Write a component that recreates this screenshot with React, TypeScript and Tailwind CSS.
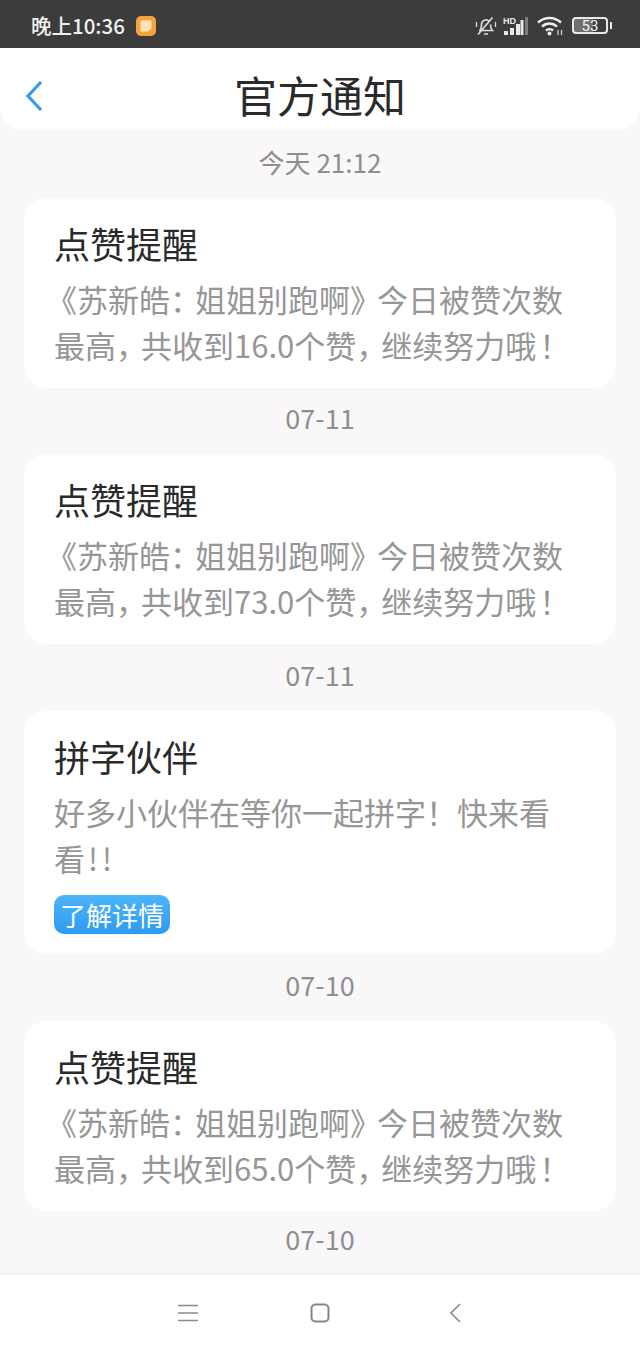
const font = "font-['Noto_Sans_CJK_SC','Noto_Sans',sans-serif]"

const DateLabel = ({ text, h }: { text: string; h: string }) => (
  <div className={`${h} flex items-center justify-center pb-[5px] text-[#8e8e8e] ${text.startsWith("今") ? "text-[26px]" : "text-[27px]"}`}>
    {text}
  </div>
)

const Card = ({ title, children, action }: { title: string; children: React.ReactNode; action?: boolean }) => (
  <div className="mx-6 px-[30px] pt-[19px] pb-[20px] bg-white rounded-[22px]">
    <div className="h-[52px] flex items-center text-[36px] text-[#2a2a2a] leading-none">{title}</div>
    <div className="mt-[7px] text-[31px] text-[#969696] leading-[46px] whitespace-nowrap">{children}</div>
    {action && (
      <div className="mt-[14px] w-[116px] h-[39px] flex items-center justify-center rounded-[10px] bg-gradient-to-b from-[#4cb4fa] to-[#2f9bf0] text-white text-[26px] leading-none">
        了解详情
      </div>
    )}
  </div>
)

// punctuation is set tighter on the phone than in Noto's full-width cells
const Comma = () => <span className="tracking-[-6px]">，</span>

const LikeText = ({ count }: { count: string }) => (
  <>
    <div className="h-[46px]">
      <span className="-ml-[8px]">《</span>苏新皓<span className="tracking-[-6px]">：</span>姐姐别跑啊
      <span className="tracking-[-4px]">》</span>今日被赞次数
    </div>
    <div className="h-[46px]">
      最高<Comma />共收到{count}个赞<Comma />继续努力哦<span className="ml-[3px]">！</span>
    </div>
  </>
)

const StatusIcons = () => (
  <div className="flex items-center">
    <svg width="22" height="20" viewBox="0 0 22 20" fill="none" stroke="#dcdcdc" strokeWidth="1.700">
      <path d="M5 14.500c1.500-2 1.500-3.500 1.500-6a4.500 4.500 0 0 1 8-2.800M15.500 8.500c0 2.500 0 4 2 6H4M9 18h4M3 18.500L17.500 1.500" />
      <path d="M1.500 6v5M20.500 6v5" strokeWidth="1.300" />
    </svg>
    <svg width="25" height="19" viewBox="0 0 25 19" className="ml-[6px]">
      <text x="0" y="7.500" fontSize="9" fontWeight="700" fill="#e8e8e8" fontFamily="Liberation Sans">HD</text>
      <rect x="1" y="15" width="4" height="4" fill="#e8e8e8" />
      <rect x="7" y="12" width="4" height="7" fill="#e8e8e8" />
      <rect x="13" y="8" width="4" height="11" fill="#e8e8e8" />
      <rect x="17.500" y="4" width="3" height="15" fill="#e8e8e8" />
      <rect x="22" y="1" width="3" height="18" fill="#7c7c7c" />
    </svg>
    <svg width="27" height="20" viewBox="0 0 27 20" fill="none" stroke="#f0f0f0" strokeWidth="2.400" className="ml-[9px]">
      <path d="M1 6.500c7-6 16-6 23 0M5 10.500c4.500-4 10.500-4 15 0M9 14.500c2-1.800 5-1.800 7 0" />
      <circle cx="12.500" cy="17.500" r="2" fill="#f0f0f0" stroke="none" />
      <path d="M21 14v5M24.500 14v5" stroke="#d0d0d0" strokeWidth="1.300" />
    </svg>
    <div className="ml-[8px] flex items-center gap-[2px]">
      <div className="w-[36px] h-[17px] rounded-[4px] border-2 border-[#e8e8e8] flex items-center justify-center pt-[1px] text-[#f0f0f0] text-[15px] leading-none font-['Roboto',sans-serif] bg-[linear-gradient(90deg,#6f6f6f_60%,transparent_60%)]">
        53
      </div>
      <div className="w-[2px] h-[7px] bg-[#e8e8e8]" />
    </div>
  </div>
)

export default function App() {
  return (
    <div className={`${font} w-[640px] h-[1351px] flex flex-col bg-[#f9f7f8] overflow-hidden`}>
      <div className="h-[48px] shrink-0 bg-[#3c3c3c] flex items-center justify-between pt-[3px] pl-[31px] pr-[28px]">
        <div className="flex items-center gap-[11px]">
          <span className="text-[20.500px] text-[#f0f0f0] font-medium leading-none">晚上10:36</span>
          <svg width="20" height="20" viewBox="0 0 20 20">
            <rect width="20" height="20" rx="5" fill="#f5a33c" />
            <path d="M4.500 4.500h11v8l-4 3h-7z" fill="#fde3b8" />
          </svg>
        </div>
        <StatusIcons />
      </div>

      <div className="h-[82px] shrink-0 relative bg-white rounded-b-[24px] flex items-center justify-center pt-[10px] text-[43px] text-[#2a2a2a] leading-none">
        官方通知
        <svg width="18" height="32" viewBox="0 0 18 32" fill="none" stroke="#2f9fec" strokeWidth="3.200" className="absolute left-[25px] top-[32px]">
          <path d="M16 2L3 16l13 14" />
        </svg>
      </div>

      <div className="flex-1 overflow-hidden">
        <DateLabel text="今天 21:12" h="h-[68px]" />
        <Card title="点赞提醒"><LikeText count="16.0" /></Card>
        <DateLabel text="07-11" h="h-[66px]" />
        <Card title="点赞提醒"><LikeText count="73.0" /></Card>
        <DateLabel text="07-11" h="h-[67px]" />
        <Card title="拼字伙伴" action>
          <div className="h-[46px]">好多小伙伴在等你一起拼字！快来看</div>
          <div className="h-[46px]">
            看<span className="tracking-[4px] ml-[3px]">!!</span>
          </div>
        </Card>
        <DateLabel text="07-10" h="h-[67px]" />
        <Card title="点赞提醒"><LikeText count="65.0" /></Card>
        <DateLabel text="07-10" h="h-[62px]" />
      </div>

      <div className="h-[78px] shrink-0 bg-white border-t border-[#ebebeb] flex items-center pl-[178px] pt-[1px]">
        <svg width="20" height="18" viewBox="0 0 20 18" fill="none" stroke="#8a8a8a" strokeWidth="1.600">
          <path d="M0 1.500h20M0 9h20M0 16.500h20" />
        </svg>
        <svg width="20" height="20" viewBox="0 0 20 20" fill="none" stroke="#858585" strokeWidth="2" className="ml-[112px]">
          <rect x="1.500" y="1.500" width="17" height="17" rx="4" />
        </svg>
        <svg width="12" height="20" viewBox="0 0 12 20" fill="none" stroke="#8a8a8a" strokeWidth="1.600" className="ml-[119px]">
          <path d="M11 1L2 10l9 9" />
        </svg>
      </div>
    </div>
  )
}
